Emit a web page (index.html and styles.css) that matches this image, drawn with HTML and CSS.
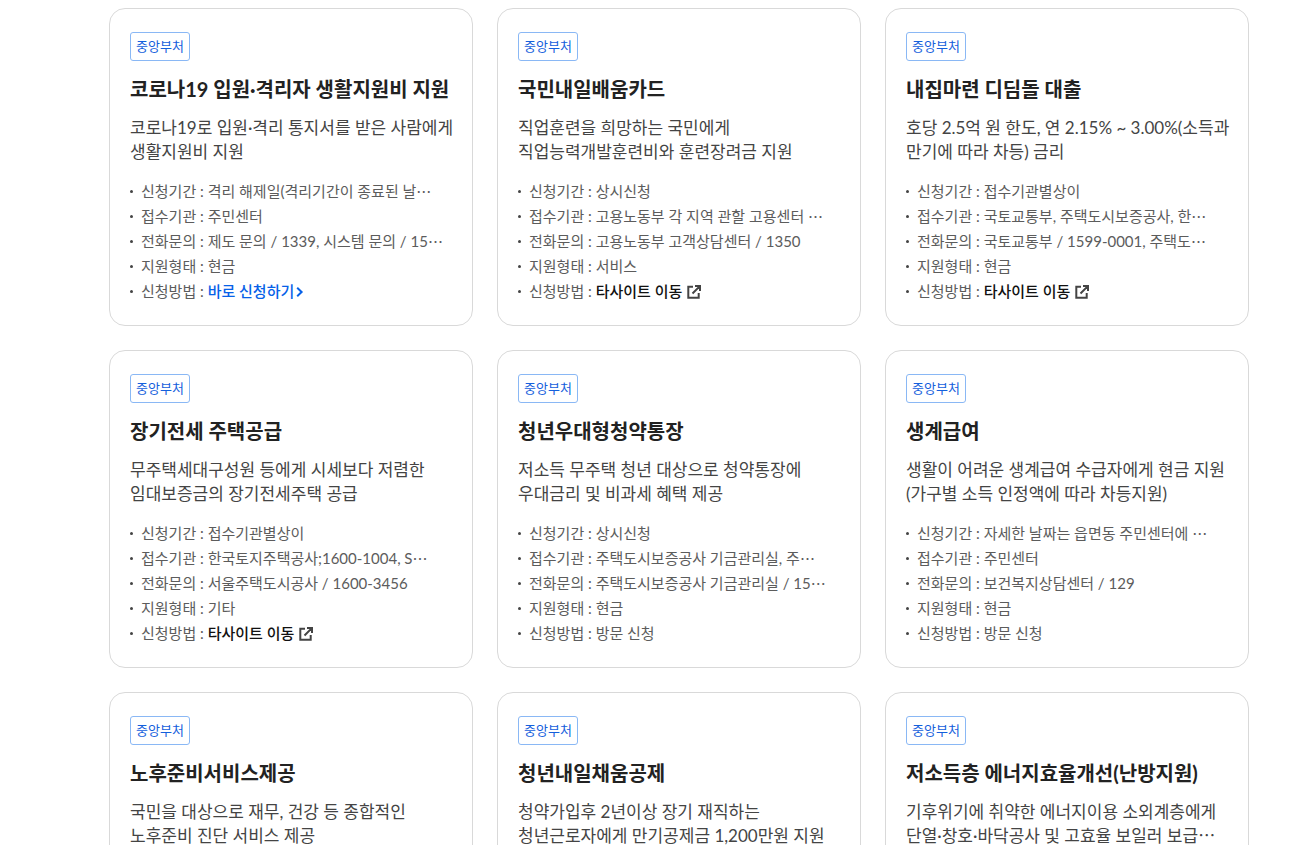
FILE: index.html
```html
<!DOCTYPE html>
<html lang="ko">
<head>
    <meta charset="UTF-8">
    <meta name="viewport" content="width=device-width, initial-scale=1.0">
    <title>지원 서비스 목록</title>
    <link rel="stylesheet" href="styles.css">
</head>
<body>
    <!-- Shared icons -->
    <svg class="sprite" aria-hidden="true">
        <symbol id="icon-external" viewBox="0 0 14 14">
            <path d="M6 1.8H1.3V12.7H11.7V8M8 1H13V6M12.6 1.4L5.5 8.5" />
        </symbol>
        <symbol id="icon-arrow" viewBox="0 0 8 10">
            <path d="M1.2 0.8L5.6 5L1.2 9.2" />
        </symbol>
    </svg>

    <main class="service-list">
        <article class="card">
            <span class="badge">중앙부처</span>
            <h3>코로나19 입원·격리자 생활지원비 지원</h3>
            <p class="desc">코로나19로 입원·격리 통지서를 받은 사람에게<br>생활지원비 지원</p>
            <ul class="info">
                <li>신청기간 : 격리 해제일(격리기간이 종료된 날<span class="more">…</span></li>
                <li>접수기관 : 주민센터</li>
                <li>전화문의 : 제도 문의 / 1339, 시스템 문의 / 15<span class="more">…</span></li>
                <li>지원형태 : 현금</li>
                <li>신청방법 : <a class="apply" href="#">바로 신청하기<svg><use href="#icon-arrow" /></svg></a></li>
            </ul>
        </article>

        <article class="card">
            <span class="badge">중앙부처</span>
            <h3>국민내일배움카드</h3>
            <p class="desc">직업훈련을 희망하는 국민에게<br>직업능력개발훈련비와 훈련장려금 지원</p>
            <ul class="info">
                <li>신청기간 : 상시신청</li>
                <li>접수기관 : 고용노동부 각 지역 관할 고용센터 <span class="more">…</span></li>
                <li>전화문의 : 고용노동부 고객상담센터 / 1350</li>
                <li>지원형태 : 서비스</li>
                <li>신청방법 : <a class="external" href="#">타사이트 이동<svg><use href="#icon-external" /></svg></a></li>
            </ul>
        </article>

        <article class="card">
            <span class="badge">중앙부처</span>
            <h3>내집마련 디딤돌 대출</h3>
            <p class="desc">호당 2.5억 원 한도, 연 2.15% ~ 3.00%(소득과<br>만기에 따라 차등) 금리</p>
            <ul class="info">
                <li>신청기간 : 접수기관별상이</li>
                <li>접수기관 : 국토교통부, 주택도시보증공사, 한<span class="more">…</span></li>
                <li>전화문의 : 국토교통부 / 1599-0001, 주택도<span class="more">…</span></li>
                <li>지원형태 : 현금</li>
                <li>신청방법 : <a class="external" href="#">타사이트 이동<svg><use href="#icon-external" /></svg></a></li>
            </ul>
        </article>

        <article class="card">
            <span class="badge">중앙부처</span>
            <h3>장기전세 주택공급</h3>
            <p class="desc">무주택세대구성원 등에게 시세보다 저렴한<br>임대보증금의 장기전세주택 공급</p>
            <ul class="info">
                <li>신청기간 : 접수기관별상이</li>
                <li>접수기관 : 한국토지주택공사;1600-1004, S<span class="more">…</span></li>
                <li>전화문의 : 서울주택도시공사 / 1600-3456</li>
                <li>지원형태 : 기타</li>
                <li>신청방법 : <a class="external" href="#">타사이트 이동<svg><use href="#icon-external" /></svg></a></li>
            </ul>
        </article>

        <article class="card">
            <span class="badge">중앙부처</span>
            <h3>청년우대형청약통장</h3>
            <p class="desc">저소득 무주택 청년 대상으로 청약통장에<br>우대금리 및 비과세 혜택 제공</p>
            <ul class="info">
                <li>신청기간 : 상시신청</li>
                <li>접수기관 : 주택도시보증공사 기금관리실, 주<span class="more">…</span></li>
                <li>전화문의 : 주택도시보증공사 기금관리실 / 15<span class="more">…</span></li>
                <li>지원형태 : 현금</li>
                <li>신청방법 : 방문 신청</li>
            </ul>
        </article>

        <article class="card">
            <span class="badge">중앙부처</span>
            <h3>생계급여</h3>
            <p class="desc">생활이 어려운 생계급여 수급자에게 현금 지원<br>(가구별 소득 인정액에 따라 차등지원)</p>
            <ul class="info">
                <li>신청기간 : 자세한 날짜는 읍면동 주민센터에 <span class="more">…</span></li>
                <li>접수기관 : 주민센터</li>
                <li>전화문의 : 보건복지상담센터 / 129</li>
                <li>지원형태 : 현금</li>
                <li>신청방법 : 방문 신청</li>
            </ul>
        </article>

        <article class="card">
            <span class="badge">중앙부처</span>
            <h3>노후준비서비스제공</h3>
            <p class="desc">국민을 대상으로 재무, 건강 등 종합적인<br>노후준비 진단 서비스 제공</p>
        </article>

        <article class="card">
            <span class="badge">중앙부처</span>
            <h3>청년내일채움공제</h3>
            <p class="desc">청약가입후 2년이상 장기 재직하는<br>청년근로자에게 만기공제금 1,200만원 지원</p>
        </article>

        <article class="card">
            <span class="badge">중앙부처</span>
            <h3>저소득층 에너지효율개선(난방지원)</h3>
            <p class="desc">기후위기에 취약한 에너지이용 소외계층에게<br>단열·창호·바닥공사 및 고효율 보일러 보급<span class="more">…</span></p>
        </article>
    </main>
</body>
</html>
```

FILE: styles.css
```css
* {
    box-sizing: border-box;
}
body {
    margin: 0;
    background-color: #fff;
    color: #222;
    font-family: Lato, 'Noto Sans CJK KR', sans-serif;
}
.sprite {
    position: absolute;
    width: 0;
    height: 0;
}
.service-list {
    display: grid;
    grid-template-columns: repeat(3, minmax(0, 1fr));
    grid-auto-rows: 1fr; /* every row as tall as the fullest card */
    gap: 24px;
    padding: 8px 59px 24px 109px;
}
.card {
    padding: 23px 20px 21px;
    border: 1px solid #d9d9d9;
    border-radius: 16px;
    white-space: nowrap;
}
.badge {
    display: block;
    width: fit-content;
    padding: 0 5px;
    border: 1px solid #8ab8f5;
    border-radius: 3px;
    font-size: 13px;
    line-height: 27px;
    color: #1460dc;
}
h3 {
    margin: 14px 0 13px;
    font-size: 20px;
    font-weight: 700;
    line-height: 28px;
}
.desc {
    margin: 0;
    font-size: 17px;
    line-height: 24px;
    color: #444;
}
.info {
    margin: 15px 0 0;
    padding: 0;
    list-style: none;
    font-size: 15px;
    line-height: 25px;
    color: #5c5c5c;
}
.info li {
    display: flex;
    align-items: center;
    white-space: pre;
}
.info li::before {
    content: "";
    width: 3px;
    height: 3px;
    margin-right: 8px;
    border-radius: 50%;
    background-color: #444;
}
/* Centred dots come from the Korean font */
.more {
    font-family: 'Noto Sans CJK KR', sans-serif;
    line-height: 1;
}
.info a {
    display: flex;
    align-items: center;
    font-weight: 500;
    text-decoration: none;
}
.info svg {
    fill: none;
    stroke: currentColor;
}
.apply {
    color: #0661e8;
}
.apply svg {
    width: 8px;
    height: 10px;
    margin-left: 2px;
    stroke-width: 2;
}
.external {
    color: #111;
}
.external svg {
    width: 14px;
    height: 14px;
    margin-left: 5px;
    color: #444;
    stroke-width: 2;
}
```
